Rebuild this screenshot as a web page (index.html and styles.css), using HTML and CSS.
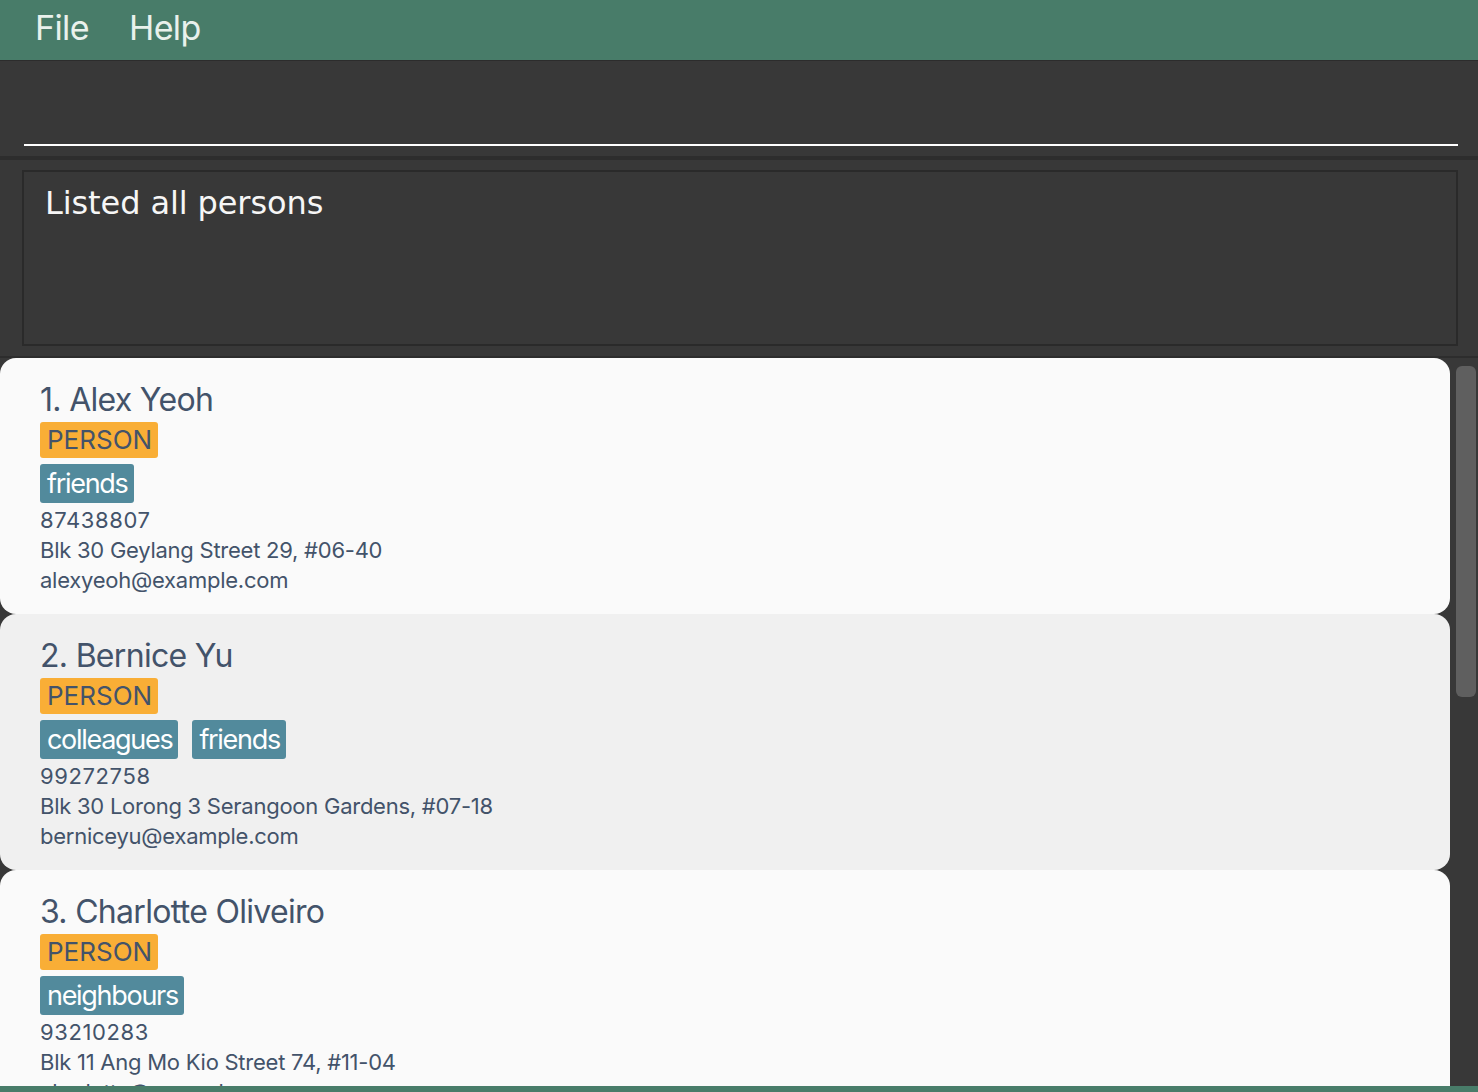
FILE: index.html
```html
<!DOCTYPE html>
<html lang="en">
<head>
<meta charset="utf-8">
<title>Address Book</title>
<link rel="stylesheet" href="styles.css">
</head>
<body>
<div class="app">
  <nav class="menubar">
    <span class="menu-item">File</span>
    <span class="menu-item">Help</span>
  </nav>
  <section class="command">
    <div class="command-input"></div>
  </section>
  <section class="result">
    <div class="result-box">Listed all persons</div>
  </section>
  <section class="list">
    <div class="cards">
      <article class="card">
        <div class="name">1. Alex Yeoh</div>
        <div class="row"><span class="type">PERSON</span></div>
        <div class="row tags"><span class="tag">friends</span></div>
        <div class="field num">87438807</div>
        <div class="field">Blk 30 Geylang Street 29, #06-40</div>
        <div class="field">alexyeoh@example.com</div>
      </article>
      <article class="card alt">
        <div class="name">2. Bernice Yu</div>
        <div class="row"><span class="type">PERSON</span></div>
        <div class="row tags"><span class="tag">colleagues</span><span class="tag">friends</span></div>
        <div class="field num">99272758</div>
        <div class="field">Blk 30 Lorong 3 Serangoon Gardens, #07-18</div>
        <div class="field">berniceyu@example.com</div>
      </article>
      <article class="card">
        <div class="name">3. Charlotte Oliveiro</div>
        <div class="row"><span class="type">PERSON</span></div>
        <div class="row tags"><span class="tag">neighbours</span></div>
        <div class="field num">93210283</div>
        <div class="field">Blk 11 Ang Mo Kio Street 74, #11-04</div>
        <div class="field">charlotte@example.com</div>
      </article>
    </div>
    <div class="scrollbar"><div class="thumb"></div></div>
  </section>
  <footer class="statusbar"></footer>
</div>
</body>
</html>
```
FILE: styles.css
```css
html, body {
  margin: 0;
  padding: 0;
  height: 100%;
  overflow: hidden;
  background: #383838;
}
.app {
  display: flex;
  flex-direction: column;
  height: 1092px;
  font-family: Inter, "Noto Sans", sans-serif;
}
.menubar {
  flex: 0 0 auto;
  height: 60px;
  background: #487c69;
  border-bottom: 1px solid #2c2c2c;
  display: flex;
  align-items: center;
  gap: 40px;
  padding-left: 35px;
  box-sizing: content-box;
}
.menu-item {
  color: #e9f1ec;
  font-size: 34px;
  line-height: 1;
  letter-spacing: -0.6px;
  padding-bottom: 4px;
}
.command {
  flex: 0 0 auto;
  height: 99px;
  box-sizing: border-box;
  padding: 0 20px 10px 24px;
  border-bottom: 4px solid #2d2d2d;
  display: flex;
  flex-direction: column;
  justify-content: flex-end;
}
.command-input {
  height: 0;
  border-bottom: 2px solid #ffffff;
}
.result {
  flex: 0 0 auto;
  height: 198px;
  box-sizing: border-box;
  padding: 10px 20px 10px 22px;
  border-bottom: 2px solid #2d2d2d;
}
.result-box {
  height: 100%;
  box-sizing: border-box;
  border: 2px solid #2a2a2a;
  color: #f6f6f6;
  font-family: "DejaVu Sans", sans-serif;
  font-size: 32px;
  line-height: 40px;
  padding: 11px 0 0 21px;
  letter-spacing: -0.1px;
}
.list {
  flex: 1 1 auto;
  display: flex;
  overflow: hidden;
  min-height: 0;
}
.cards {
  width: 1450px;
  flex: 0 0 auto;
  display: flex;
  flex-direction: column;
}
.card {
  flex: 0 0 auto;
  height: 256px;
  box-sizing: border-box;
  background: #fafafa;
  border-radius: 16px;
  padding: 22px 0 0 40px;
  color: #43536a;
}
.card.alt {
  background: #f0f0f0;
}
.name {
  font-size: 32px;
  line-height: 40px;
  letter-spacing: -0.7px;
}
.row {
  display: flex;
  gap: 14px;
}
.type {
  margin-top: 2px;
  height: 36px;
  line-height: 36px;
  background: #f9ae36;
  border-radius: 3px;
  padding: 0 6px 0 7px;
  font-size: 26px;
  color: #43536a;
  letter-spacing: 0;
}
.tags {
  margin-top: 6px;
}
.tag {
  height: 39px;
  line-height: 39px;
  background: #528a9c;
  border-radius: 3px;
  padding: 0 6px 0 7px;
  font-size: 27px;
  color: #ffffff;
  letter-spacing: -1.3px;
}
.tags + .field {
  margin-top: 2px;
}
.field {
  font-size: 22px;
  line-height: 30px;
  letter-spacing: -0.25px;
}
.field.num {
  letter-spacing: 0.6px;
}
.scrollbar {
  flex: 1 1 auto;
  padding: 8px 2px 0 6px;
}
.thumb {
  height: 331px;
  background: #5f5f5f;
  border-radius: 6px;
}
.statusbar {
  flex: 0 0 6px;
  background: #487c69;
}
```
